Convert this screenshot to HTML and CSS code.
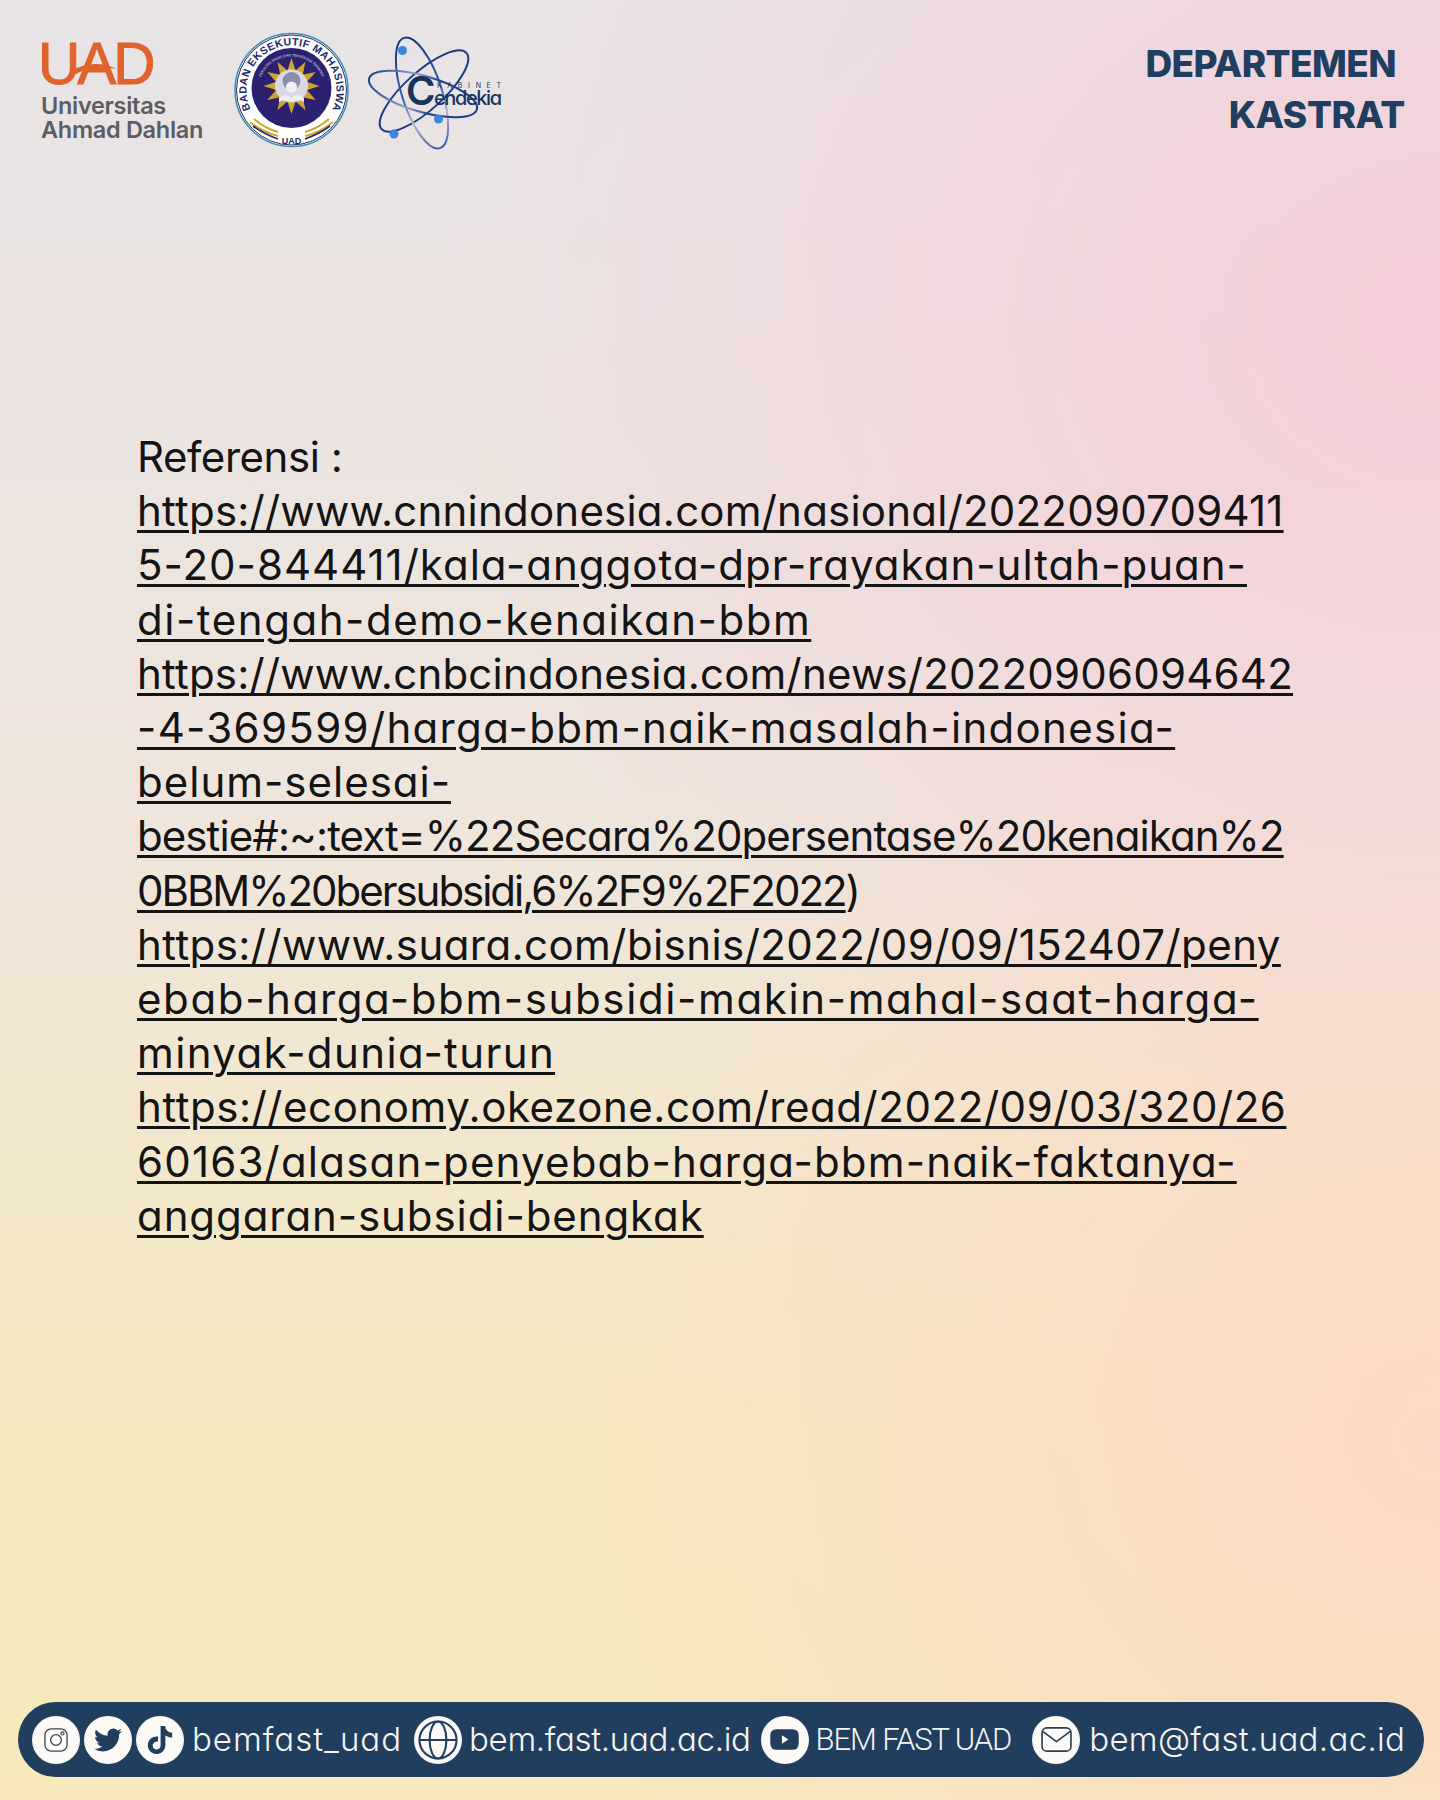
FILE: index.html
```html
<!DOCTYPE html>
<html lang="id">
<head>
<meta charset="utf-8">
<title>Referensi - Departemen Kastrat</title>
<link rel="stylesheet" href="styles.css">
</head>
<body>
<div class="page">
  <header class="top">
    <div class="logos">
      <div class="uad">
        <svg class="uad-mark" viewBox="0 0 116 46" aria-label="UAD">
          <text class="uad-letters" x="-3" y="42">UAD</text>
          <path d="M30 29 Q52 16 76 27 Q52 22 33 33Z" fill="#e0622c"/>
        </svg>
        <div class="uad-name">Universitas</div>
        <div class="uad-name">Ahmad Dahlan</div>
      </div>
      <svg class="seal" viewBox="0 0 115 118" aria-label="BEM">
        <defs>
          <path id="arcOuter" d="M17 78 A45 45 0 1 1 98 78"/>
          <path id="arcInner" d="M27 70 A33 33 0 1 1 88 70"/>
          <polygon id="ray" points="48,54 67,54 57.5,25" fill="#cfa52e"/>
        </defs>
        <circle cx="57.5" cy="58" r="56.5" fill="#fff" stroke="#3d8fae" stroke-width="1.5"/>
        <circle cx="57.5" cy="58" r="55" fill="none" stroke="#232a66" stroke-width="1"/>
        <text class="seal-text"><textPath href="#arcOuter" startOffset="50%" text-anchor="middle" textLength="180">BADAN EKSEKUTIF MAHASISWA</textPath></text>
        <circle cx="57.5" cy="56" r="40" fill="#2b2170"/>
        <text class="seal-small"><textPath href="#arcInner" startOffset="50%" text-anchor="middle">FAKULTAS SAINS DAN TEKNOLOGI TERAPAN</textPath></text>
        <g transform="translate(0 1)">
          <use href="#ray"/>
          <use href="#ray" transform="rotate(30 57.5 53)"/>
          <use href="#ray" transform="rotate(60 57.5 53)"/>
          <use href="#ray" transform="rotate(90 57.5 53)"/>
          <use href="#ray" transform="rotate(120 57.5 53)"/>
          <use href="#ray" transform="rotate(150 57.5 53)"/>
          <use href="#ray" transform="rotate(180 57.5 53)"/>
          <use href="#ray" transform="rotate(210 57.5 53)"/>
          <use href="#ray" transform="rotate(240 57.5 53)"/>
          <use href="#ray" transform="rotate(270 57.5 53)"/>
          <use href="#ray" transform="rotate(300 57.5 53)"/>
          <use href="#ray" transform="rotate(330 57.5 53)"/>
        </g>
        <circle cx="57.5" cy="54" r="16.5" fill="#d9d9e6"/>
        <circle cx="57.5" cy="49" r="9" fill="#8e8cab"/>
        <circle cx="57.5" cy="55" r="5.5" fill="#f1f1f5"/>
        <path d="M45 66 Q52 60 57.5 66 Q63 60 70 66 L70 70 Q63 66 57.5 70 Q52 66 45 70Z" fill="#f0f0f4"/>
        <path d="M16 90 Q28 100 44 104 M20 87 Q32 97 44 100" fill="none" stroke="#cfa52e" stroke-width="2"/>
        <path d="M99 90 Q87 100 71 104 M95 87 Q83 97 71 100" fill="none" stroke="#cfa52e" stroke-width="2"/>
        <path d="M19 94 Q30 102 44 107 M96 94 Q85 102 71 107" fill="none" stroke="#232a66" stroke-width="1.6"/>
        <text class="seal-uad" x="57.5" y="112" text-anchor="middle">UAD</text>
      </svg>
      <svg class="atom" viewBox="0 0 134 114" aria-label="Kabinet Cendekia">
        <defs>
          <linearGradient id="fadeA" x1="0" x2="1" y1="0" y2="0">
            <stop offset="0" stop-color="#1d3d8c"/><stop offset=".4" stop-color="#9aa3c4"/><stop offset=".6" stop-color="#1d3d8c"/><stop offset="1" stop-color="#1d3d8c"/>
          </linearGradient>
          <linearGradient id="fadeB" x1="0" x2="1" y1="0" y2="0">
            <stop offset="0" stop-color="#16337f"/><stop offset=".5" stop-color="#3a5cae"/><stop offset=".72" stop-color="#b7b7c9"/><stop offset="1" stop-color="#3a5cae"/>
          </linearGradient>
        </defs>
        <g fill="none" stroke-width="2">
          <ellipse cx="55" cy="55" rx="57" ry="19" transform="rotate(-42 55 55)" stroke="#1c3a86"/>
          <ellipse cx="53" cy="57" rx="58" ry="20" transform="rotate(72 53 57)" stroke="url(#fadeB)"/>
          <ellipse cx="54" cy="58" rx="56" ry="18" transform="rotate(16 54 58)" stroke="url(#fadeA)"/>
        </g>
        <circle cx="33.5" cy="14.5" r="4.5" fill="#3a86d8"/>
        <circle cx="69.5" cy="83" r="4.5" fill="#3a86d8"/>
        <circle cx="25" cy="98" r="4.5" fill="#3a86d8"/>
        <text class="atom-c" x="37" y="69">C</text>
        <text class="atom-kab" x="68" y="52" textLength="64">KABINET</text>
        <text class="atom-name" x="65" y="69" textLength="68">endekia</text>
      </svg>
    </div>
    <h1 class="dept"><span class="dept-a">DEPARTEMEN</span><span class="dept-b">KASTRAT</span></h1>
  </header>

  <main class="refs">
    <span class="line ls1">Referensi :</span>
    <a class="line ls2" href="#">https://www.cnnindonesia.com/nasional/2022090709411</a>
    <a class="line ls3" href="#">5-20-844411/kala-anggota-dpr-rayakan-ultah-puan-</a>
    <a class="line ls4" href="#">di-tengah-demo-kenaikan-bbm</a>
    <a class="line ls5" href="#">https://www.cnbcindonesia.com/news/20220906094642</a>
    <a class="line ls6" href="#">-4-369599/harga-bbm-naik-masalah-indonesia-</a>
    <a class="line ls7" href="#">belum-selesai-</a>
    <a class="line ls8" href="#">bestie#:~:text=%22Secara%20persentase%20kenaikan%2</a>
    <span class="line ls9"><a href="#">0BBM%20bersubsidi,6%2F9%2F2022</a>)</span>
    <a class="line ls10" href="#">https://www.suara.com/bisnis/2022/09/09/152407/peny</a>
    <a class="line ls11" href="#">ebab-harga-bbm-subsidi-makin-mahal-saat-harga-</a>
    <a class="line ls12" href="#">minyak-dunia-turun</a>
    <a class="line ls13" href="#">https://economy.okezone.com/read/2022/09/03/320/26</a>
    <a class="line ls14" href="#">60163/alasan-penyebab-harga-bbm-naik-faktanya-</a>
    <a class="line ls15" href="#">anggaran-subsidi-bengkak</a>
  </main>

  <footer class="pill">
    <span class="badge">
      <svg viewBox="0 0 24 24" class="ic-ig"><rect x="2.5" y="2.5" width="19" height="19" rx="5.5" fill="none" stroke="#3f4650" stroke-width="1.1"/><circle cx="12" cy="12" r="4.6" fill="none" stroke="#3f4650" stroke-width="1.1"/><circle cx="17.6" cy="6.4" r="1.3" fill="none" stroke="#3f4650" stroke-width="1"/></svg>
    </span>
    <span class="badge badge-near">
      <svg viewBox="0 0 24 24" class="ic-tw"><path fill="#213e5f" d="M23.953 4.57a10 10 0 01-2.825.775 4.958 4.958 0 002.163-2.723c-.951.555-2.005.959-3.127 1.184a4.92 4.92 0 00-8.384 4.482C7.69 8.095 4.067 6.13 1.64 3.162a4.822 4.822 0 00-.666 2.475c0 1.71.87 3.213 2.188 4.096a4.904 4.904 0 01-2.228-.616v.06a4.923 4.923 0 003.946 4.827 4.996 4.996 0 01-2.212.085 4.936 4.936 0 004.604 3.417 9.867 9.867 0 01-6.102 2.105c-.39 0-.779-.023-1.17-.067a13.995 13.995 0 007.557 2.209c9.053 0 13.998-7.496 13.998-13.985 0-.21 0-.42-.015-.63A9.935 9.935 0 0024 4.59z"/></svg>
    </span>
    <span class="badge badge-near">
      <svg viewBox="0 0 24 24" class="ic-tt"><path fill="#213e5f" d="M12.525.02c1.31-.02 2.61-.01 3.91-.02.08 1.53.63 3.09 1.75 4.17 1.12 1.11 2.7 1.62 4.24 1.79v4.03c-1.44-.05-2.89-.35-4.2-.97-.57-.26-1.1-.59-1.62-.93-.01 2.92.01 5.84-.02 8.75-.08 1.4-.54 2.79-1.35 3.94-1.31 1.92-3.58 3.17-5.91 3.21-1.43.08-2.86-.31-4.08-1.03-2.02-1.19-3.44-3.37-3.65-5.71-.02-.5-.03-1-.01-1.49.18-1.9 1.12-3.72 2.58-4.96 1.66-1.44 3.98-2.13 6.15-1.72.02 1.48-.04 2.96-.04 4.44-.99-.32-2.15-.23-3.02.37-.63.41-1.11 1.04-1.36 1.75-.21.51-.15 1.07-.14 1.61.24 1.64 1.82 3.02 3.5 2.87 1.12-.01 2.19-.66 2.77-1.61.19-.33.4-.67.41-1.06.1-1.79.06-3.57.07-5.36.01-4.03-.01-8.05.02-12.07z"/></svg>
    </span>
    <span class="label lb-ig">bemfast_uad</span>
    <span class="badge">
      <svg viewBox="0 0 24 24" class="ic-gl"><g fill="none" stroke="#213e5f" stroke-width="1.2"><circle cx="12" cy="12" r="10.6"/><ellipse cx="12" cy="12" rx="4.8" ry="10.6"/><path d="M1.4 12h21.2"/></g></svg>
    </span>
    <span class="label lb-web">bem.fast.uad.ac.id</span>
    <span class="badge">
      <svg viewBox="0 0 24 24" class="ic-yt"><rect x="1" y="4" width="22" height="16" rx="4.5" fill="#213e5f"/><path d="M10 8.8v6.4l5-3.2z" fill="#fff"/></svg>
    </span>
    <span class="label lb-yt">BEM FAST UAD</span>
    <span class="badge">
      <svg viewBox="0 0 24 24" class="ic-ml"><g fill="none" stroke="#2c3f55" stroke-width="1.2" stroke-linejoin="round" stroke-linecap="round"><rect x="1.5" y="3.5" width="21" height="17" rx="3.5"/><path d="M2.5 6.5 12 13.5l9.5-7"/></g></svg>
    </span>
    <span class="label lb-ml">bem@fast.uad.ac.id</span>
  </footer>
</div>
</body>
</html>
```
FILE: styles.css
```css
* { box-sizing: border-box; }
html, body { margin: 0; padding: 0; }
body { font-family: Inter, "Liberation Sans", sans-serif; }

.page {
  width: 1440px;
  height: 1800px;
  display: flex;
  flex-direction: column;
  background:
    radial-gradient(ellipse 1000px 850px at 100% 18%, #f5ced9 0%, rgba(245, 206, 217, 0) 100%),
    radial-gradient(ellipse 900px 800px at 100% 80%, #fcd9c6 0%, rgba(252, 217, 198, 0) 100%),
    linear-gradient(180deg, #e8e3e6 0%, #efe5dc 45%, #f6e9bf 80%, #f7e9bc 100%);
}

.top {
  display: flex;
  justify-content: space-between;
  padding: 32px 35px 0 41px;
  height: 180px;
}
.logos { display: flex; align-items: flex-start; }

.uad { width: 193px; padding-top: 10px; color: #5c5d64; }
.uad-mark { display: block; width: 116px; height: 46px; margin-bottom: 5.5px; overflow: visible; }
.uad-letters {
  font: 400 58.5px "Liberation Sans", sans-serif;
  letter-spacing: -3px;
  fill: #e0622c;
  stroke: #e0622c;
  stroke-width: 1;
}
.uad-name {
  font-size: 23.5px;
  font-weight: 600;
  line-height: 24px;
  letter-spacing: -.3px;
}
.seal { width: 115px; height: 118px; }
.atom { width: 134px; height: 114px; margin: 4px 0 0 20px; overflow: visible; }

.seal-text { font: 700 10.6px "Liberation Sans", sans-serif; fill: #232a66; }
.seal-small { font: 400 3.6px "Liberation Sans", sans-serif; fill: #e8e8f4; }
.seal-uad { font: 700 9px "Liberation Sans", sans-serif; fill: #232a66; }
.atom-c { font: 600 40px Inter, sans-serif; fill: #16345c; }
.atom-kab { font: 400 7px Inter, sans-serif; fill: #1c3a5c; }
.atom-name { font: 500 20px Inter, sans-serif; fill: #16345c; font-feature-settings: "cv11"; }

.dept {
  display: flex;
  flex-direction: column;
  align-items: flex-end;
  margin: 0;
  padding-top: 5.5px;
  font-size: 37px;
  font-weight: 800;
  line-height: 51px;
  color: #203f60;
}
.dept-a { margin-right: 9px; letter-spacing: -.6px; }
.dept-b { letter-spacing: -.4px; }

.refs {
  flex: 1;
  padding: 250px 0 0 137px;
  font-size: 42px;
  line-height: 54.2px;
  color: #141414;
  font-feature-settings: "cv11";
}
.line { display: block; white-space: nowrap; color: inherit; text-decoration: none; }
.refs a {
  color: inherit;
  text-decoration: underline;
  text-decoration-thickness: 2.5px;
  text-underline-offset: 4px;
}
.ls1 { letter-spacing: -.45px; }
.ls2 { letter-spacing: .22px; }
.ls3 { letter-spacing: 1.01px; }
.ls4 { letter-spacing: 1.55px; }
.ls5 { letter-spacing: .21px; }
.ls6 { letter-spacing: 1.33px; }
.ls7 { letter-spacing: 1px; }
.ls8 { letter-spacing: -.92px; }
.ls9 { letter-spacing: -2.03px; }
.ls10 { letter-spacing: .43px; }
.ls11 { letter-spacing: 1.63px; }
.ls12 { letter-spacing: 1.39px; }
.ls13 { letter-spacing: .56px; }
.ls14 { letter-spacing: 1.2px; }
.ls15 { letter-spacing: .92px; }

.pill {
  display: flex;
  align-items: center;
  height: 75px;
  margin: 0 16px 23px 18px;
  padding-left: 14px;
  border-radius: 38px;
  background: #213e5f;
  color: #f5f5f2;
}
.badge {
  flex: none;
  width: 48px;
  height: 48px;
  border-radius: 50%;
  background: #fbfaf7;
  display: flex;
  align-items: center;
  justify-content: center;
}
.badge-near { margin-left: 4px; }
.ic-ig, .ic-tw, .ic-tt { width: 28px; height: 28px; }
.ic-ml { width: 33px; height: 33px; }
.ic-yt { width: 31px; height: 31px; }
.ic-gl { width: 42px; height: 42px; }
.label { font-weight: 300; font-size: 33px; line-height: 1; font-feature-settings: "cv11"; white-space: nowrap; }
.lb-ig { margin: 0 12px 0 8px; letter-spacing: 1px; }
.lb-web { margin: 0 10px 0 7px; letter-spacing: -.33px; }
.lb-yt { margin: 0 21px 0 7px; font-family: Roboto, sans-serif; font-size: 31px; letter-spacing: -1.1px; }
.lb-ml { margin-left: 9px; letter-spacing: .33px; }
```
